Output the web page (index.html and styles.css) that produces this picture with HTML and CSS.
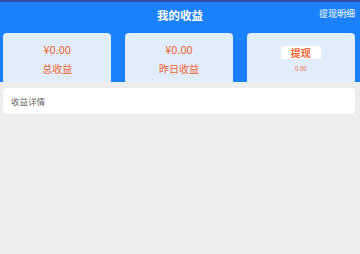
FILE: index.html
```html
<!doctype html>
<html lang="zh">
<head>
    <meta charset="UTF-8">
    <title>我的收益</title>
    <link rel="stylesheet" href="styles.css">
</head>
<body>
    <header class="incomeHead">
        <div class="headBar">
            <h1 class="headTitle">我的收益</h1>
            <span class="headLink">提现明细</span>
        </div>
        <div class="cardRow">
            <div class="card">
                <div class="cardValue">¥0.00</div>
                <div class="cardLabel">总收益</div>
            </div>
            <div class="card">
                <div class="cardValue">¥0.00</div>
                <div class="cardLabel">昨日收益</div>
            </div>
            <div class="card">
                <button class="withdrawBtn">提现</button>
                <div class="cardSmall">0.00</div>
            </div>
        </div>
    </header>
    <section class="detailBox">
        <div class="detailTitle">收益详情</div>
    </section>
</body>
</html>
```
FILE: styles.css
```css
body {
    margin: 0;
    background-color: #ededed;
    font-family: "Noto Sans CJK SC", "Noto Sans", sans-serif;
    height: 254px;
}

.incomeHead {
    background-color: #1a80fb;
    border-top: 2px solid #3b4aa0;
}

.headBar {
    position: relative;
    height: 31px;
    display: flex;
    align-items: center;
    justify-content: center;
}

.headTitle {
    margin: 0 0 6px;
    font-size: 11.5px;
    font-weight: bold;
    color: #ffffff;
}

.headLink {
    position: absolute;
    right: 5px;
    top: 5px;
    font-size: 9px;
    color: #ffffff;
}

.cardRow {
    display: flex;
    gap: 13.5px;
    padding: 0 5px 0 3px;
}

.card {
    flex: 1;
    height: 49px;
    background-color: #e2edfc;
    border-radius: 4px 4px 0 0;
    display: flex;
    flex-direction: column;
    align-items: center;
    justify-content: center;
    color: #f2622f;
}

.cardValue {
    font-size: 11px;
    line-height: 13px;
    margin-top: 2px;
    margin-bottom: 6px;
}

.cardLabel {
    font-size: 10px;
    line-height: 13px;
}

.withdrawBtn {
    width: 40px;
    height: 13px;
    padding: 0;
    border: none;
    background-color: #ffffff;
    color: #f2622f;
    font-family: inherit;
    font-size: 10px;
    font-weight: bold;
    line-height: 13px;
    margin-top: 4px;
    margin-bottom: 6px;
}

.cardSmall {
    font-size: 6px;
    line-height: 8px;
}

.detailBox {
    margin: 6px 5px 0 3px;
    background-color: #ffffff;
    border-radius: 4px;
    height: 25px;
    display: flex;
    align-items: center;
    box-shadow: 0 2px 0 #f6f6f6;
}

.detailTitle {
    padding-left: 8px;
    font-size: 8.5px;
    color: #666666;
}
```
